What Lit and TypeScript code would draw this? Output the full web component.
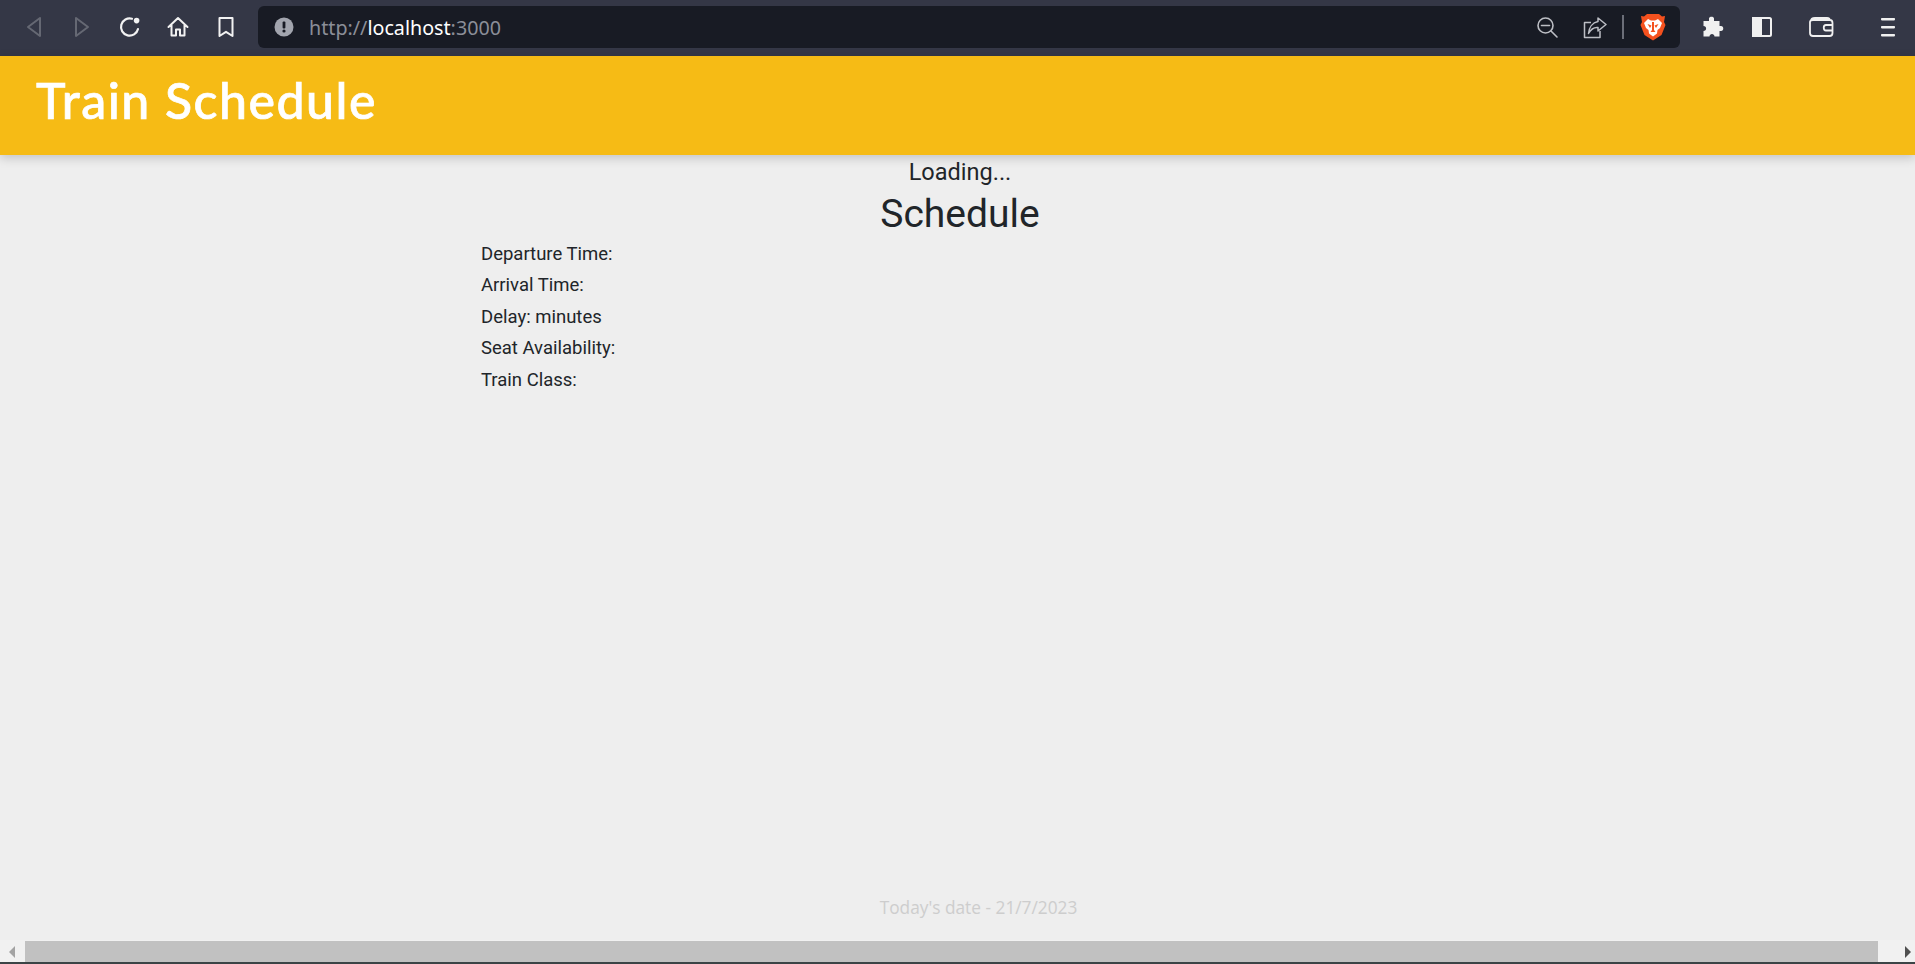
import { LitElement, html, css } from 'lit';
import { customElement } from 'lit/decorators.js';

@customElement('browser-bar')
export class BrowserBar extends LitElement {
    static styles = css`
        :host {
            display: flex;
            align-items: center;
            height: 56px;
            flex: none;
            background: #343746;
            box-sizing: border-box;
            padding: 6px 0 8px 0;
        }

        svg { display: block; flex: none; }

        .nav {
            display: flex;
            align-items: center;
            gap: 24px;
            padding-left: 22px;
            width: 258px;
            box-sizing: border-box;
        }

        .address {
            display: flex;
            align-items: center;
            width: 1422px;
            height: 42px;
            border-radius: 6px;
            background: #181b24;
            box-sizing: border-box;
            padding: 0 14px 0 16px;
        }

        .url {
            margin-left: 15px;
            font-family: 'Noto Sans', sans-serif;
            font-size: 19.7px;
            color: #8b8e98;
            flex: 1;
        }

        .url b { font-weight: 400; color: #fff; }

        .divider {
            width: 2px;
            height: 24px;
            margin: 0 16px 0 15px;
            background: #6b6e78;
        }

        .actions {
            display: flex;
            align-items: center;
            padding-left: 20px;
        }

        .share { margin-left: 24px; }
        .sidebar { margin-left: 26px; }
        .wallet { margin-left: 34px; }
        .menu { margin-left: 44px; }
    `;

    render() {
        return html`
            <div class="nav">
                <svg width="24" height="24" viewBox="0 0 24 24" fill="none" stroke="#656873" stroke-width="2" stroke-linejoin="round"><path d="M18 3 L6 12 L18 21 Z"/></svg>
                <svg width="24" height="24" viewBox="0 0 24 24" fill="none" stroke="#656873" stroke-width="2" stroke-linejoin="round"><path d="M6 3 L18 12 L6 21 Z"/></svg>
                <svg width="24" height="24" viewBox="0 0 24 24" fill="none" stroke="#f2f2f2" stroke-width="2.2" stroke-linecap="round"><path d="M20 14 A8.6 8.6 0 1 1 14 3.8"/><circle cx="18.6" cy="5.6" r="2.8" fill="#f2f2f2" stroke="none"/></svg>
                <svg width="24" height="24" viewBox="0 0 24 24" fill="none" stroke="#f2f2f2" stroke-width="2" stroke-linejoin="round" stroke-linecap="round"><path d="M2.5 12 L12 3 L21.5 12 M5.5 10 V20.5 H10 V14.5 H14 V20.5 H18.5 V10"/></svg>
                <svg width="24" height="24" viewBox="0 0 24 24" fill="none" stroke="#f2f2f2" stroke-width="2" stroke-linejoin="round"><path d="M5.5 3 H18.5 V21 L12 16.8 L5.5 21 Z"/></svg>
            </div>
            <div class="address">
                <svg width="20" height="20" viewBox="0 0 20 20"><circle cx="10" cy="10" r="9.5" fill="#a2a5ae"/><rect x="8.6" y="4.5" width="2.8" height="7" rx="1" fill="#181b24"/><circle cx="10" cy="14" r="1.6" fill="#181b24"/></svg>
                <span class="url">http://<b>localhost</b>:3000</span>
                <svg width="24" height="24" viewBox="0 0 24 24" fill="none" stroke="#bcbec4" stroke-width="1.6" stroke-linecap="round"><circle cx="10.5" cy="10.5" r="7.5"/><path d="M6.5 10.5 H14.5 M16 16 L22 22"/></svg>
                <svg class="share" width="24" height="24" viewBox="0 0 24 24" fill="none" stroke="#bcbec4" stroke-width="1.5" stroke-linejoin="round"><path d="M8 7.5 H1.5 V22.5 H17 V16"/><path d="M15 3 L23 9.5 L15 16 V12.5 C11 12 8 14 5.5 18.5 C6 12.5 9.5 7.5 15 6.5 Z"/></svg>
                <div class="divider"></div>
                <svg width="26" height="28" viewBox="0 0 26 28"><path d="M7 1 H19 L22 3.5 L25 3 L24 9 L25.5 12 L21.5 22 L13 27.5 L4.5 22 L0.5 12 L2 9 L1 3 L4 3.5 Z" fill="#f4511e"/><path d="M8 6 L11 7.5 H15 L18 6 L22 10 L20 15 L17.5 17 L17 20.5 L13 23.5 L9 20.5 L8.5 17 L6 15 L4 10 Z" fill="#fff"/><path d="M7.5 11 L11.5 12.5 L10 15 Z M18.5 11 L14.5 12.5 L16 15 Z M12 9 H14 V17 L15.5 19 H10.5 L12 17 Z" fill="#f4511e"/></svg>
            </div>
            <div class="actions">
                <svg width="24" height="24" viewBox="0 0 24 24" fill="#f0f0f0"><path d="M9 3.5 C9 1 14 1 14 3.5 V6 H19.5 V11 H21 C24 11 24 16 21 16 H19.5 V21.5 H14.5 C14.5 18 9.5 18 9.5 21.5 H3.5 V16 C7 16 7 11 3.5 11 V6 H9 Z"/></svg>
                <svg class="sidebar" width="24" height="24" viewBox="0 0 24 24" fill="none" stroke="#f0f0f0" stroke-width="2"><rect x="3" y="3" width="18" height="18" rx="1.5"/><rect x="3" y="3" width="8" height="18" fill="#f0f0f0"/></svg>
                <svg class="wallet" width="26" height="24" viewBox="0 0 26 24" fill="none" stroke="#f0f0f0" stroke-width="1.8" stroke-linejoin="round"><path d="M3 6 C3 3.5 5 3 7 3 H19 C21 3 22 4 22 6 M2 7 C2 5.5 3 5 5 5 H22 C24 5 24.5 6 24.5 8 V18 C24.5 20.5 23 21 21.5 21 H5 C3 21 2 20 2 18 Z M24.5 10 H18 C15 10 15 15.5 18 15.5 H24.5"/></svg>
                <svg class="menu" width="20" height="24" viewBox="0 0 20 24" fill="#f0f0f0"><rect x="3" y="3" width="14" height="2.4" rx="0.8"/><rect x="3" y="11" width="14" height="2.4" rx="0.8"/><rect x="3" y="19" width="14" height="2.4" rx="0.8"/></svg>
            </div>
        `;
    }
}

@customElement('app-root')
export class AppRoot extends LitElement {
    static styles = css`
        :host {
            display: flex;
            flex-direction: column;
            height: 964px;
            overflow: hidden;
            background: #eeeeee;
            font-family: Roboto, sans-serif;
            color: #212529;
        }

        .header {
            position: relative;
            z-index: 1;
            flex: none;
            height: 99px;
            box-sizing: border-box;
            padding: 10px 0 0 36px;
            background: #f6bb15;
            box-shadow: 0 3px 10px rgba(0, 0, 0, 0.18);
        }

        .header h1 {
            margin: 0;
            font-family: 'Lato', sans-serif;
            font-size: 50px;
            line-height: 68px;
            letter-spacing: 1.5px;
            font-weight: 500;
            color: #fff;
            -webkit-text-stroke: 0.7px #fff;
        }

        .main {
            flex: 1;
            width: 958px;
            margin-left: 481px;
            text-align: center;
        }

        .loading {
            font-size: 23.5px;
            line-height: 35px;
        }

        .main h2 {
            margin: 0 0 2.5px 0;
            font-size: 39px;
            line-height: 48px;
            font-weight: 400;
        }

        .main p {
            margin: 0 0 4.5px 0;
            font-size: 18.5px;
            line-height: 27px;
            text-align: left;
        }

        .footer {
            flex: none;
            height: 44px;
            padding-left: 42px;
            text-align: center;
            font-family: 'Open Sans', sans-serif;
            font-size: 17.3px;
            color: #cdcdcd;
        }

        .scrollbar {
            flex: none;
            display: flex;
            height: 24px;
            box-sizing: border-box;
            padding-top: 1px;
            background: #f1f1f1;
            border-bottom: 2px solid #3b4446;
        }

        .arrow {
            width: 25px;
            flex: none;
            display: flex;
            align-items: center;
            justify-content: center;
        }

        .arrow.right { width: 37px; justify-content: flex-end; padding-right: 4px; box-sizing: border-box; }
        .thumb { width: 1853px; background: #c1c1c1; }
    `;

    render() {
        return html`
            <browser-bar></browser-bar>
            <div class="header"><h1>Train Schedule</h1></div>
            <div class="main">
                <div class="loading">Loading...</div>
                <h2>Schedule</h2>
                <p>Departure Time:</p>
                <p>Arrival Time:</p>
                <p>Delay: minutes</p>
                <p>Seat Availability:</p>
                <p>Train Class:</p>
            </div>
            <div class="footer">Today's date - 21/7/2023</div>
            <div class="scrollbar">
                <div class="arrow"><svg width="7" height="12" viewBox="0 0 7 12"><path d="M6 0 V12 L0 6 Z" fill="#a3a3a3"/></svg></div>
                <div class="thumb"></div>
                <div class="arrow right"><svg width="7" height="12" viewBox="0 0 7 12"><path d="M1 0 V12 L7 6 Z" fill="#505050"/></svg></div>
            </div>
        `;
    }
}
